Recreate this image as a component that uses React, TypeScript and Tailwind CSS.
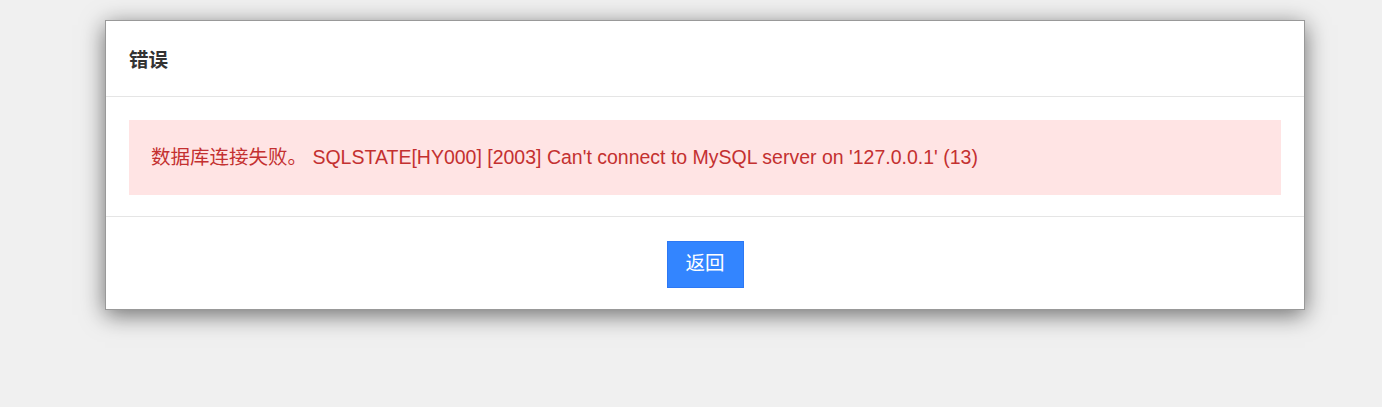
export default function App() {
  return (
    <div
      className="min-h-[407px] w-full bg-[#f0f0f0] pt-[20px]"
      style={{ fontFamily: '"Liberation Sans", Arial, "Noto Sans CJK SC", sans-serif' }}
    >
      <div className="ml-[105px] w-[1200px] border border-[#999999] bg-white shadow-[0_5px_22px_rgba(0,0,0,0.55)]">
        <div className="flex h-[76px] items-center border-b border-[#e5e5e5] px-[23px] pt-[5px]">
          <h4 className="text-[19.5px] font-bold text-[#333333]">错误</h4>
        </div>
        <div className="border-b border-[#e5e5e5] px-[23px] pt-[23px] pb-[21px]">
          <div className="flex h-[75px] items-center bg-[#ffe4e4] px-[22px] pt-[1px] text-[19.5px] text-[#c43030]">
            数据库连接失败。 SQLSTATE[HY000] [2003] Can't connect to MySQL server on '127.0.0.1' (13)
          </div>
        </div>
        <div className="flex h-[92px] items-center justify-center pt-[2px]">
          <button className="h-[47px] w-[77px] border border-[#2d78f4] bg-[#3385ff] text-[19.5px] text-white">
            返回
          </button>
        </div>
      </div>
    </div>
  );
}
